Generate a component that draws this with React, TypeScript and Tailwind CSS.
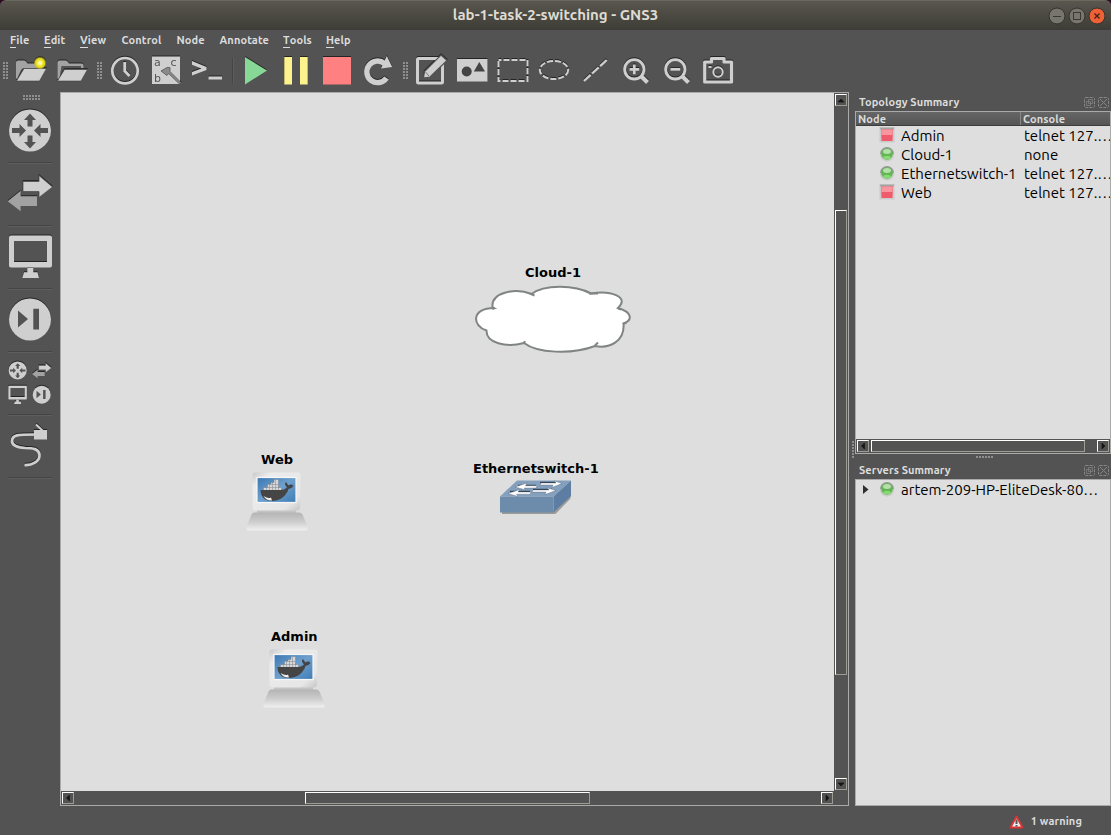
import React from "react";

const LIGHT = "#cfcfcf";
const DARK = "#535353";

type Kids = { children?: React.ReactNode };

function Tool({ children }: Kids) {
  return (
    <svg width="41" height="42" viewBox="0 0 41 42" className="shrink-0 [filter:drop-shadow(0_-1px_0_#242424)]" fill={LIGHT}>
      {children}
    </svg>
  );
}

function SideTool({ children }: Kids) {
  return (
    <div className="h-[63px] w-[60px] shrink-0">
      <svg width="60" height="61" viewBox="0 0 60 61" className="block [filter:drop-shadow(0_-1px_0_#242424)]" fill={LIGHT}>
        {children}
      </svg>
      <div className="mx-2 h-[2px] border-t border-[#444] bg-[#5e5e5e]" />
    </div>
  );
}

function Grip({ cols, rows }: { cols: number; rows: number }) {
  const dots: React.ReactNode[] = [];
  for (let r = 0; r < rows; r++)
    for (let c = 0; c < cols; c++) dots.push(<rect key={`${r}-${c}`} x={c * 3} y={r * 3} width="2" height="2" fill="#8f8f8f" />);
  return (
    <svg width={cols * 3 - 1} height={rows * 3 - 1} className="block shrink-0">
      {dots}
    </svg>
  );
}

const router = (
  <g>
    <circle cx="30" cy="29.5" r="21" />
    <path
      fill={DARK}
      d="M30 12.500l6 6.500h-3.500V25.500h-5v-6.500H24zM30 47.500l6-6.500h-3.500v-6.500h-5V41H24zM26 29.500l-6.500 6.500V32h-7.500v-5h7.500V23zM34 29.500l6.500-6.500v4h7.500v5h-7.500v4z"
    />
  </g>
);

const swap = (
  <g>
    <path fill="#a2a2a2" d="M7.700 37.300L20.700 26.700V32.300H37V42H20.700V47.300z" />
    <path stroke={DARK} strokeWidth="0.8" d="M23 17.500H39V11.500L52.500 23L39 33.500V27.500H23z" />
  </g>
);

const monitor = (
  <g>
    <path
      fillRule="evenodd"
      d="M11 8.500H50q2 0 2 2V38.500q0 2-2 2H11q-2 0-2-2V10.500q0-2 2-2zM14 14V35H47V14zM27.300 40H33.300V45.300H37.500L39 51H22.300L24 45.300H27.300z"
    />
  </g>
);

const skip = (
  <g>
    <circle cx="30" cy="29.500" r="21" />
    <path fill={DARK} d="M18 20.500V37.500L28 29zM33.300 18.700H39V39.500H33.300z" />
  </g>
);

function FolderBack() {
  return <path fill="#a3a3a3" d="M5 28V12.500q0-2 2-2h6q1 0 2 1l1.500 2H29q2 0 2 2V18H14q-3 0-4 2L6 29z" />;
}

function Toolbar() {
  return (
    <div className="flex h-[42px] items-start">
      <div className="flex w-[11px] pt-3 pl-[3px]">
        <Grip cols={2} rows={6} />
      </div>
      <Tool>
        <FolderBack />
        <path stroke="#444" strokeWidth="0.600" d="M13 18.500H35.500L28.500 31H5.500z" />
        <defs>
          <radialGradient id="sun">
            <stop offset="0" stopColor="#fffff0" />
            <stop offset="0.4" stopColor="#f4ef45" />
            <stop offset="0.75" stopColor="#d8cc10" />
            <stop offset="1" stopColor="#a89e20" stopOpacity="0" />
          </radialGradient>
        </defs>
        <circle cx="29" cy="13" r="6.500" fill="url(#sun)" />
      </Tool>
      <Tool>
        <path fill="#a3a3a3" d="M5.500 28V12.500q0-2 2-2h6q1 0 2 1l1.500 2H29.500q2 0 2 2V18H29V16H9.500L8 26L6.500 29z" />
        <path stroke="#444" strokeWidth="0.600" d="M12.500 19.500H35.500L29 31H5.500z" />
      </Tool>
      <div className="flex w-[11px] pt-3 pl-[4px]">
        <Grip cols={2} rows={6} />
      </div>
      <Tool>
        <circle cx="21" cy="20.700" r="12.700" fill="none" stroke={LIGHT} strokeWidth="2.700" />
        <path d="M20.700 12V21L25.500 26" fill="none" stroke={LIGHT} strokeWidth="2.800" />
      </Tool>
      <Tool>
        <rect x="7" y="6.500" width="28" height="27.500" />
        <g fill="#555" fontFamily="'DejaVu Sans', sans-serif" fontSize="11">
          <text x="9" y="16">a</text>
          <text x="25.500" y="16">c</text>
          <text x="9" y="31.500">b</text>
        </g>
        <path fill="#8b8b8b" stroke="#555" strokeWidth="0.8" d="M16 21L22 17.500H25V21.500L36 32.500L34.500 34L23.500 23.500L22 25.500z" />
      </Tool>
      <Tool>
        <path d="M6 11L20.500 17V20L6 25.500V22L15.500 18.500L6 14.800zM22.500 26.500H36V29.500H22.500z" />
      </Tool>
      <div className="h-[42px] w-[7px] py-2 pl-[5px]">
        <div className="h-[25px] w-[2px] border-l border-[#444] bg-[#5e5e5e]" />
      </div>
      <Tool>
        <path fill="#87d897" d="M11 7L33 20.500L11 34.500z" />
      </Tool>
      <Tool>
        <path fill="#fdf38c" d="M9.300 7H17V34.500H9.300zM25 7H32.700V34.500H25z" />
      </Tool>
      <Tool>
        <rect fill="#ff8080" x="7" y="7" width="28" height="27.500" />
      </Tool>
      <Tool>
        <path d="M27.500 13.500A10.800 10.800 0 1 0 29.500 28" fill="none" stroke={LIGHT} strokeWidth="5.400" />
        <path d="M29.800 6L35.200 17L24 18.500z" />
      </Tool>
      <div className="flex w-[12px] pt-3 pl-[5px]">
        <Grip cols={2} rows={6} />
      </div>
      <Tool>
        <rect x="7.500" y="8.500" width="25" height="24.500" rx="1" fill="none" stroke={LIGHT} strokeWidth="3" />
        <path stroke={DARK} strokeWidth="1.200" d="M31 5L37 10.500L20 27L13.500 28L14.500 21.500z" />
        <path d="M15.500 22L19 26" stroke={DARK} strokeWidth="0.700" />
      </Tool>
      <Tool>
        <rect x="6" y="9" width="30.500" height="22.500" />
        <circle cx="15.700" cy="21.500" r="5" fill="#444" />
        <path fill="#444" d="M22.800 21.500L28.300 12L34 21.500z" />
      </Tool>
      <Tool>
        <rect x="6.500" y="10" width="29" height="21" fill="none" stroke={LIGHT} strokeWidth="2" strokeDasharray="6 2" strokeDashoffset="3" />
      </Tool>
      <Tool>
        <ellipse cx="21" cy="20" rx="14.200" ry="9" fill="none" stroke={LIGHT} strokeWidth="2" strokeDasharray="6 2" />
      </Tool>
      <Tool>
        <path d="M10 31L32.700 10" stroke={LIGHT} strokeWidth="2.300" strokeDasharray="9 2" />
      </Tool>
      <Tool>
        <circle cx="19.300" cy="19.300" r="9.700" fill="none" stroke={LIGHT} strokeWidth="2.800" />
        <path d="M26.500 26.500L32.500 32.500" stroke={LIGHT} strokeWidth="4" />
        <path d="M14.500 19.300H24.200M19.300 14.500V24.200" stroke={LIGHT} strokeWidth="2.700" />
      </Tool>
      <Tool>
        <circle cx="19.300" cy="19.300" r="9.700" fill="none" stroke={LIGHT} strokeWidth="2.800" />
        <path d="M26.500 26.500L32.500 32.500" stroke={LIGHT} strokeWidth="4" />
        <path d="M14.500 19.300H24.200" stroke={LIGHT} strokeWidth="2.700" />
      </Tool>
      <Tool>
        <path d="M7.700 12H14.500V8.500H27V12H34.500V32H7.700z" fill="none" stroke={LIGHT} strokeWidth="3.200" strokeLinejoin="round" />
        <circle cx="21" cy="22" r="4.700" fill="none" stroke={LIGHT} strokeWidth="2" />
        <rect x="11.500" y="16" width="3" height="2" />
      </Tool>
    </div>
  );
}

const menus = [
  { label: "File", accel: true, box: "w-[34px]" },
  { label: "Edit", accel: true, box: "w-[36px]" },
  { label: "View", accel: true, box: "w-[41.5px]" },
  { label: "Control", accel: false, box: "w-[55px]" },
  { label: "Node", accel: false, box: "w-[43px]" },
  { label: "Annotate", accel: false, box: "w-[63.5px]" },
  { label: "Tools", accel: true, box: "w-[43px]" },
  { label: "Help", accel: true, box: "w-[40px]" },
];

function MenuBar() {
  return (
    <div className="flex h-5 items-center pl-[10px] text-[11px] leading-5 font-bold tracking-[0.1px] text-[#dcdcdc]">
      {menus.map((m) => (
        <div key={m.label} className={`${m.box} whitespace-nowrap`}>
          {m.accel ? <span className="inline-block h-[15px] border-b border-[#dcdcdc] leading-[15px]">{m.label[0]}</span> : m.label[0]}
          {m.label.slice(1)}
        </div>
      ))}
    </div>
  );
}

const arrows = {
  up: "M2 7L5 4L8 7z",
  down: "M2 4L5 7L8 4z",
  left: "M6.500 2L3.500 5L6.500 8z",
  right: "M4 2L7 5L4 8z",
};

function ScrollButton({ dir }: { dir: keyof typeof arrows }) {
  return (
    <div className="h-3 w-3 shrink-0 border border-t-white border-r-[#9c9b94] border-b-[#9c9b94] border-l-white bg-[#535353]">
      <svg width="10" height="10" className="block" fill="#151515" stroke="#151515" strokeWidth="0.700">
        <path d={arrows[dir]} />
      </svg>
    </div>
  );
}

const thumb = "border border-t-white border-l-white border-r-[#9c9b94] border-b-[#9c9b94] bg-[#535353] shrink-0";

function Computer() {
  return (
    <svg width="64" height="60" viewBox="0 0 64 60" className="block">
      <defs>
        <linearGradient id="shell" x1="0" y1="0" x2="1" y2="1">
          <stop offset="0" stopColor="#c8c8c8" />
          <stop offset="0.2" stopColor="#ececec" />
          <stop offset="0.8" stopColor="#e6e6e6" />
          <stop offset="1" stopColor="#c4c4c4" />
        </linearGradient>
        <linearGradient id="base" x1="0" y1="0" x2="0" y2="1">
          <stop offset="0" stopColor="#b4b4b4" />
          <stop offset="0.5" stopColor="#cccccc" />
          <stop offset="1" stopColor="#f0f0f0" />
        </linearGradient>
        <linearGradient id="screen" x1="0" y1="0" x2="1" y2="1">
          <stop offset="0" stopColor="#3a77b4" />
          <stop offset="0.5" stopColor="#6ea0cc" />
          <stop offset="1" stopColor="#3f7cb5" />
        </linearGradient>
      </defs>
      <path fill="#c4c4c4" d="M11 37H50V42H11z" />
      <path fill="url(#base)" d="M8.500 40.500H53q2.500 0 3.500 2L61.500 54.500V57q0 1.500-2 1.500H2.500q-2 0-2-1.500V55L5.500 42.500q1-2 3-2z" />
      <path fill="url(#shell)" d="M8.500 0.500H52q2.500 0 2.500 2.500L54 35q0 3.500-3.500 3.500H10q-3.500 0-3.500-3.500L6.500 3q0-2.500 2-2.500z" />
      <rect x="11" y="5.500" width="39" height="25" fill="url(#screen)" stroke="#f7f7f7" strokeWidth="1.200" />
      <g transform="translate(-0.500 -0.500)">
        <path fill="#d7d7d7" stroke="#6d7a86" strokeWidth="0.400" d="M18 16H22V12.500H25.500V11H28.500V8H33V16H36V19H18z" />
        <path stroke="#7d858c" strokeWidth="0.500" d="M21 15.500V19M24 12.500V19M27 11V19M30 8V19M33 15V19M18 16H34M22 13H33" fill="none" />
        <path fill="#454545" d="M15 18.500H35q4 0 6.500-2.500Q38 12 40.500 10.500L43 14Q46 12 48 14.500Q46 17.500 43 17.500C41 24 35 29.500 26 29.500C19 29.500 15 25 15 18.500z" />
        <path fill="#eee" d="M18 24.500Q23 27.500 25.500 26L26.500 29Q21 29.500 18 24.500z" />
      </g>
    </svg>
  );
}

function Canvas() {
  return (
    <div className="relative h-[698px] w-[773px] bg-[#dedede] font-['DejaVu_Sans',sans-serif] text-[13px] leading-4 font-bold text-black">
      <div className="absolute top-[172px] left-[464px] whitespace-nowrap">Cloud-1</div>
      <svg className="absolute top-[191px] left-[413px]" width="160" height="72" viewBox="0 0 160 72" fill="#fff" stroke="#808584" strokeWidth="2">
        <path d="M18.500 23C17 8 42 3.500 57.500 10C70 0.500 100 0.500 117 9.500C137 6 156 13 144 24C158 28 159 36 149.500 39.500C151 57 136 65 121 62C97 71 63 69 50 59C32 64 12 59 12.500 46.500C-2 42 -3 24 20 24z" />
        <path d="M18.500 25C19 25 19.500 24.500 20.500 24.500M56 9.500L60.500 11.500M115 9.500H124M144 24.500L147 25.500M149 40L152.500 38.500M50.500 57V60M121 61.500L124 58.500" />
      </svg>
      <div className="absolute top-[359px] left-[200px]">Web</div>
      <div className="absolute top-[379px] left-[185px]"><Computer /></div>
      <div className="absolute top-[368px] left-[412px] whitespace-nowrap">Ethernetswitch-1</div>
      <svg className="absolute top-[386px] left-[437px]" width="76" height="38" viewBox="0 0 76 38">
        <path fill="#9b9b98" d="M4 32H56L72.500 16V19.500L57.500 35H4z" />
        <path fill="#85a0bd" d="M2 17.500L19 1.500H73L55.500 17.500z" />
        <path fill="#6d8bab" d="M2 17.500H55.500V33.500H2z" />
        <path fill="#5d7ea2" d="M55.500 17.500L73 1.500V17L55.500 33.500z" />
        <g fill="none" stroke="#36495e" strokeWidth="1.600">
          <path d="M20 6.500H38M12 12.500H32M42 3.500H59M35 10.500H54" />
        </g>
        <g fill="#fff" stroke="#36495e" strokeWidth="0.300">
          <path d="M17 8L29 4L27.500 6.800H39L38 9H26L28 11zM10 14.500L22 10.500L20 13H33L32 15.200H18.500L20 17.500z" />
          <path d="M43 4H58L56 1.800L64 4.500L54 8.500L55 6H42zM35 11H51L49 8.800L58 11.500L47 15.500L48 13H34z" />
        </g>
      </svg>
      <div className="absolute top-[536px] left-[210px]">Admin</div>
      <div className="absolute top-[556px] left-[202px]"><Computer /></div>
    </div>
  );
}

function Led({ red }: { red?: boolean }) {
  return (
    <svg width="16" height="16" viewBox="0 0 16 16" className="-mt-[2px] block shrink-0">
      {red ? (
        <>
          <path fill="#cacaca" d="M0.500 0.500H15.500V15.500H0.500z" />
          <path fill="#a3a3a3" d="M0.500 0.500H15.500L14 3H2z" />
          <path fill="#ef5a6c" d="M2 2.500H14L13.500 14H2.500z" />
          <path fill="#f8959f" d="M2.300 2.500H13.700L13.500 8H2.500z" />
        </>
      ) : (
        <>
          <circle cx="8" cy="8.500" r="7.200" fill="#cccccc" />
          <path d="M1 8A7 7 0 0 1 15 8" fill="#969b96" />
          <circle cx="8" cy="8" r="5.800" fill="#61b552" />
          <ellipse cx="8" cy="5.500" rx="4" ry="2.500" fill="#b4e0aa" />
          <ellipse cx="8" cy="11.500" rx="3.800" ry="1.800" fill="#84dc70" />
        </>
      )}
    </svg>
  );
}

function DockTitle({ title, box }: { title: string; box: string }) {
  return (
    <div className={`${box} flex shrink-0 items-center justify-between pr-[2px] pl-1 text-[11px] font-bold tracking-[0.1px] text-[#dcdcdc]`}>
      <span className="whitespace-nowrap">{title}</span>
      <svg width="25" height="11" fill="none" stroke="#858585" strokeWidth="1">
        <path strokeDasharray="3 1" d="M1.500 0.500H9.500L10.500 1.500V9.500L9.500 10.500H1.500L0.500 9.500V1.500z" />
        <path d="M4.500 2.500H8.500V6.500H4.500zM2.500 4.500H6.500V8.500H2.500z" strokeWidth="0.700" />
        <path strokeDasharray="3 1" d="M15.500 0.500H23.500L24.500 1.500V9.500L23.500 10.500H15.500L14.500 9.500V1.500z" />
        <path d="M16 2L23 9M23 2L16 9" />
      </svg>
    </div>
  );
}

const nodes = [
  { name: "Admin", con: "telnet 127.…", red: true },
  { name: "Cloud-1", con: "none", red: false },
  { name: "Ethernetswitch-1", con: "telnet 127.…", red: false },
  { name: "Web", con: "telnet 127.…", red: true },
];

function Docks() {
  return (
    <div className="flex w-[256px] shrink-0 flex-col">
      <DockTitle title="Topology Summary" box="h-[19px] pt-[1px]" />
      <div className="flex h-[343px] shrink-0 flex-col border border-[#aaa] bg-[#dedede]">
        <div className="flex h-[14px] shrink-0 border-b border-[#3c3c3c] bg-linear-to-b from-[#666] to-[#555] text-[11px] leading-[15px] font-bold tracking-[0.1px] text-[#dcdcdc]">
          <div className="w-[165px] border-r border-[#888] pl-[2px]">Node</div>
          <div className="pl-[2px]">Console</div>
        </div>
        <div className="flex-1 overflow-hidden text-[15px] text-black">
          {nodes.map((n) => (
            <div key={n.name} className="flex h-[19px] items-center leading-[19px] whitespace-nowrap">
              <div className="w-[45px] pl-[23px]"><Led red={n.red} /></div>
              <div className="w-[123px]">{n.name}</div>
              <div className="w-[86px] overflow-hidden">{n.con}</div>
            </div>
          ))}
        </div>
        <div className="flex h-[14px] shrink-0 items-center bg-[#535353] pl-px">
          <ScrollButton dir="left" />
          <div className={`${thumb} ml-[2px] h-3 w-[214px]`} />
          <div className="ml-auto pr-px"><ScrollButton dir="right" /></div>
        </div>
      </div>
      <div className="flex h-[7px] shrink-0 items-start justify-center pt-[2px] pl-[2px]"><Grip cols={6} rows={1} /></div>
      <DockTitle title="Servers Summary" box="h-[18px]" />
      <div className="flex-1 border border-[#aaa] bg-[#dedede] text-[15px] text-black">
        <div className="flex h-[19px] items-center leading-[19px] whitespace-nowrap">
          <svg width="23" height="19" fill="#303030"><path d="M7 5L12.500 9.500L7 14z" /></svg>
          <div className="w-[22px]"><Led /></div>
          <div>artem-209-HP-EliteDesk-80…</div>
        </div>
      </div>
    </div>
  );
}

function TitleBar() {
  return (
    <div className="bg-[#2c0a22]">
      <div className="flex h-[30px] items-center rounded-t-[6px] border-t border-[#6b695f] bg-linear-to-b from-[#59574e] to-[#3d3c36]">
        <div className="w-[56px]" />
        <div className="flex-1 text-center text-[15px] font-bold text-[#dfdbd2]">lab-1-task-2-switching - GNS3</div>
        <svg width="64" height="28" className="-ml-[8px]" fill="none">
          <circle cx="10" cy="14" r="8" fill="#77756d" stroke="#34332e" />
          <path d="M6 14.500H14" stroke="#393832" />
          <circle cx="30" cy="14" r="8" fill="#77756d" stroke="#34332e" />
          <rect x="26.500" y="10.500" width="7" height="7" stroke="#393832" />
          <circle cx="50" cy="14" r="8" fill="#ee6035" stroke="#34332e" />
          <path d="M47.500 11.500L52.500 16.500M52.500 11.500L47.500 16.500" stroke="#45221a" strokeWidth="1.400" />
        </svg>
      </div>
    </div>
  );
}

export default function App() {
  return (
    <div className="flex h-[835px] w-[1111px] flex-col overflow-hidden bg-[#535353] font-['Ubuntu','Open_Sans','Noto_Sans',sans-serif]">
      <TitleBar />
      <MenuBar />
      <Toolbar />
      <div className="flex h-[714px] shrink-0">
        <div className="flex w-[60px] shrink-0 flex-col">
          <div className="flex h-[9px] shrink-0 items-center justify-center pt-[2px] pl-[3px]"><Grip cols={6} rows={2} /></div>
          <SideTool>{router}</SideTool>
          <SideTool>{swap}</SideTool>
          <SideTool>{monitor}</SideTool>
          <SideTool>{skip}</SideTool>
          <SideTool>
            <g transform="translate(4.800 4.800) scale(0.43)">{router}</g>
            <g transform="translate(28.800 5) scale(0.43)">{swap}</g>
            <g transform="translate(4.500 29) scale(0.43)">{monitor}</g>
            <g transform="translate(28.800 29) scale(0.43)">{skip}</g>
          </SideTool>
          <SideTool>
            <path fill="none" stroke={LIGHT} strokeWidth="2.700" d="M24.500 49C32 49.500 39.500 45.500 39.500 39.500C39.500 32.500 32 32 25 32C17 31.500 12 29.500 12 25C12 18.500 18 18.500 35 18.500" />
            <path d="M34 14H47V23.500H34z" />
            <path d="M36 8.500L43 15" stroke={LIGHT} strokeWidth="2" />
          </SideTool>
        </div>
        <div className="flex w-[789px] shrink-0 flex-col border border-[#aaa]">
          <div className="flex">
            <Canvas />
            <div className="flex h-[698px] w-[14px] flex-col items-center py-px">
              <ScrollButton dir="up" />
              <div className={`${thumb} mt-[104px] h-[465px] w-3`} />
              <div className="mt-auto"><ScrollButton dir="down" /></div>
            </div>
          </div>
          <div className="flex h-[14px] items-center pr-[15px] pl-px">
            <ScrollButton dir="left" />
            <div className={`${thumb} ml-[231px] h-3 w-[285px]`} />
            <div className="ml-auto"><ScrollButton dir="right" /></div>
          </div>
        </div>
        <div className="flex w-[6px] shrink-0 items-center justify-center pl-[2px]"><Grip cols={1} rows={6} /></div>
        <Docks />
      </div>
      <div className="flex h-[29px] items-center justify-end pt-[2px] pr-[29px] text-[11px] font-bold tracking-[0.1px] text-[#dcdcdc]">
        <svg width="15" height="14" className="mr-[7px]">
          <path d="M7.500 1.500L13.500 12.500H1.500z" fill="#eee" stroke="#dc3535" strokeWidth="1.800" strokeLinejoin="round" />
          <path d="M6.500 4.500H8.500V9H6.500zM6.500 10H8.500V11.500H6.500z" fill="#555" />
        </svg>
        1 warning
      </div>
    </div>
  );
}
